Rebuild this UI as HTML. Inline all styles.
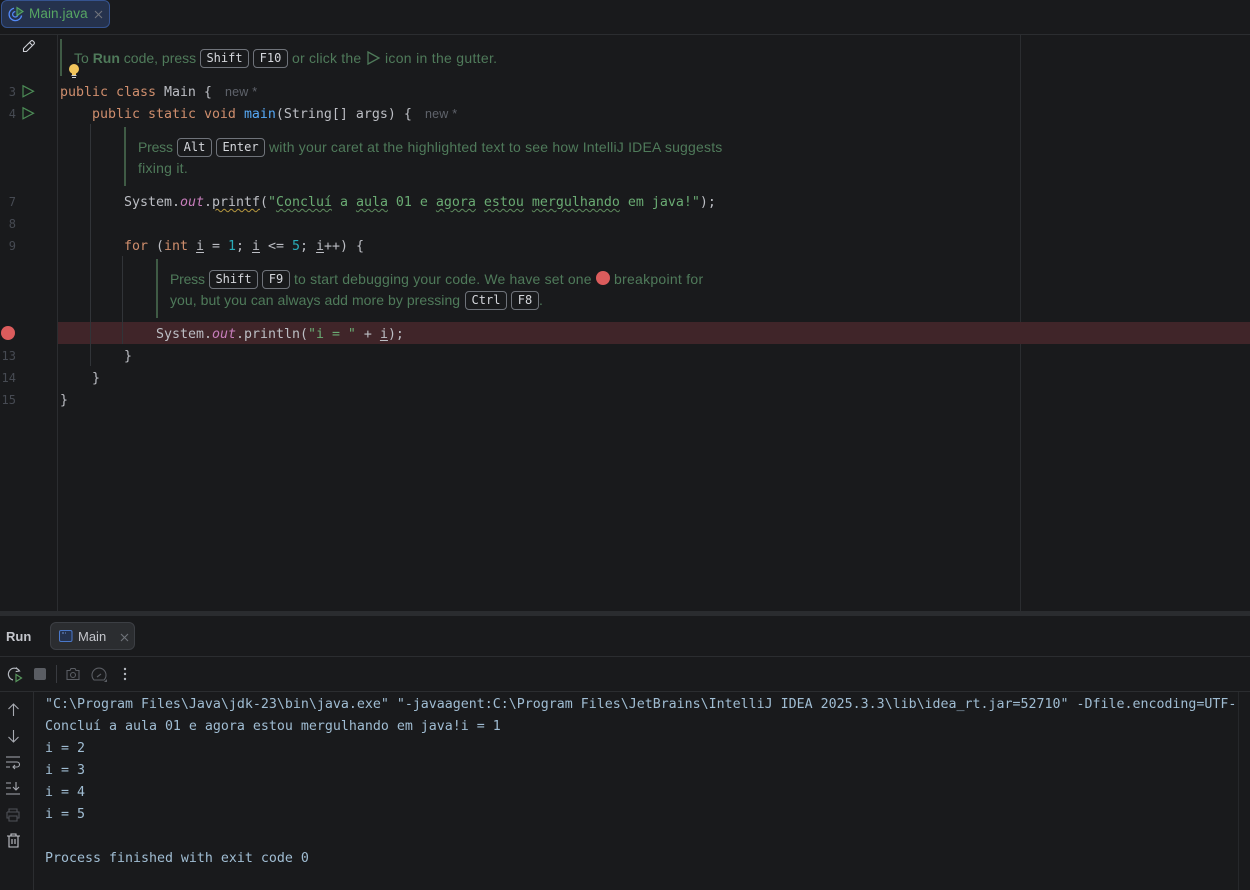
<!DOCTYPE html>
<html><head><meta charset="utf-8"><style>
html,body{margin:0;padding:0;background:#191a1c;width:1250px;height:890px;overflow:hidden}
.a{position:absolute}
.c,.c *{font-family:"DejaVu Sans Mono",monospace;font-size:13.29px}
.c{position:absolute;white-space:pre;height:22px;line-height:22px;color:#bcbec4;margin-top:2px}
.k{color:#cf8e6d}.s{color:#6aab73}.n{color:#2aacb8}.m{color:#56a8f5}.o{color:#c77dbb;font-style:italic}
.u{text-decoration:underline;text-underline-offset:2px}
.w{text-decoration:underline wavy #5f8c5f 1px;text-underline-offset:2px}
.wy{text-decoration:underline wavy #b5973f 1px;text-underline-offset:2px}
.ln{position:absolute;left:0;width:16px;text-align:right;font:12px/22px "DejaVu Sans Mono",monospace;color:#464a52;margin-top:1px}
.h{position:absolute;white-space:pre;font:14px/21px "Liberation Sans",sans-serif;color:#4f7a5a;letter-spacing:.2px;height:21px}
.h b{font-weight:bold}
.kb{position:absolute;height:17px;border:1px solid #6f737a;border-radius:4px;box-sizing:content-box;color:#d5d7dc;font:12px/17px "DejaVu Sans Mono",monospace;text-align:center}
.bar{position:absolute;width:2px;background:#3f5b45}
.g{position:absolute;width:1px;background:#313438}
.con{position:absolute;left:45px;white-space:pre;font:13.29px/22px "DejaVu Sans Mono",monospace;color:#a0bdd3;height:22px;margin-top:2px}
svg{position:absolute;overflow:visible}
</style></head><body>
<!-- tab bar -->
<div class="a" style="left:0;top:34px;width:1250px;height:1px;background:#2b2d30"></div>
<div class="a" style="left:1px;top:0;width:107px;height:26px;background:#25324d;border:1px solid #35538f;border-radius:6px"></div>
<svg style="left:8px;top:6px" width="18" height="16" viewBox="0 0 18 16" fill="none"><path d="M13.600 9.500A6.300 6.300 0 1 1 6 2.200" stroke="#548af7" stroke-width="1.3"/><path d="M10 8.300A2.700 2.700 0 1 1 7.300 5.600" stroke="#548af7" stroke-width="1.2"/><path d="M9 1.500v8l6-4z" fill="#2e5a44" stroke="#57a663" stroke-width="1.1"/></svg>
<div class="a" style="left:29px;top:5px;font:13.5px/18px 'Liberation Sans',sans-serif;color:#57a663;letter-spacing:.1px">Main.java</div>
<svg style="left:94px;top:10px" width="9" height="9" fill="none"><path d="M1 1l7 7M8 1L1 8" stroke="#6f737a" stroke-width="1.1"/></svg>

<!-- editor lines -->
<div class="a" style="left:57px;top:35px;width:1px;height:576px;background:#2b2d30"></div>
<div class="a" style="left:1020px;top:35px;width:1px;height:576px;background:#2b2d30"></div>
<div class="a" style="left:58px;top:322px;width:1192px;height:22px;background:#402529"></div>

<div class="g" style="left:90px;top:124px;height:242px"></div>
<div class="g" style="left:122px;top:256px;height:88px"></div>

<svg style="left:22px;top:39px" width="14" height="14" fill="none" stroke="#ced0d6" stroke-width="1.1"><path d="M1.500 9.500 9 2a1.400 1.400 0 0 1 2 0l1 1a1.400 1.400 0 0 1 0 2l-7.500 7.500H1.500z"/><path d="M7.500 3.500l3 3"/></svg>

<!-- line numbers -->
<div class="ln" style="top:80px">3</div>
<div class="ln" style="top:102px">4</div>
<div class="ln" style="top:190px">7</div>
<div class="ln" style="top:212px">8</div>
<div class="ln" style="top:234px">9</div>
<div class="ln" style="top:344px">13</div>
<div class="ln" style="top:366px">14</div>
<div class="ln" style="top:388px">15</div>

<svg style="left:22px;top:85px" width="13" height="13" fill="none"><path d="M1 .8v11l10.500-5.500z" stroke="#4b8a55" stroke-width="1.2"/></svg>
<svg style="left:22px;top:107px" width="13" height="13" fill="none"><path d="M1 .8v11l10.500-5.500z" stroke="#4b8a55" stroke-width="1.2"/></svg>
<div class="a" style="left:1px;top:326px;width:14px;height:14px;border-radius:50%;background:#db5c5c"></div>

<!-- hint 1 -->
<div class="bar" style="left:60px;top:39px;height:37px"></div>
<div class="h" style="left:74px;top:48px;letter-spacing:0">To <b>Run</b> code, press</div>
<div class="kb" style="left:200px;top:49px;width:47px">Shift</div>
<div class="kb" style="left:253px;top:49px;width:33px">F10</div>
<div class="h" style="left:292px;top:48px;letter-spacing:.2px">or click the</div>
<svg style="left:367px;top:51px" width="13" height="14" fill="none"><path d="M1 1v12l11-6z" stroke="#4f7a5a" stroke-width="1.3"/></svg>
<div class="h" style="left:385px;top:48px;letter-spacing:.3px">icon in the gutter.</div>
<svg style="left:67px;top:63px" width="14" height="16"><circle cx="7" cy="6" r="5" fill="#f2c55c"/><rect x="5" y="10" width="4" height="2" fill="#f2c55c"/><rect x="4.500" y="12" width="5" height="1" fill="#ced0d6"/><rect x="5" y="14" width="4" height="1" fill="#ced0d6"/></svg>

<!-- code -->
<div class="c" style="left:60px;top:80px"><span class="k">public class</span> Main {</div>
<div class="a" style="left:225px;top:83px;font:12.5px/18px 'Liberation Sans',sans-serif;color:#5f636b;letter-spacing:.2px">new *</div>
<div class="c" style="left:92px;top:102px"><span class="k">public static void</span> <span class="m">main</span>(String[] args) {</div>
<div class="a" style="left:425px;top:105px;font:12.5px/18px 'Liberation Sans',sans-serif;color:#5f636b;letter-spacing:.2px">new *</div>

<!-- hint 2 -->
<div class="bar" style="left:124px;top:127px;height:59px"></div>
<div class="h" style="left:138px;top:137px;letter-spacing:-.2px">Press</div>
<div class="kb" style="left:177px;top:138px;width:33px">Alt</div>
<div class="kb" style="left:216px;top:138px;width:47px">Enter</div>
<div class="h" style="left:269px;top:137px">with your caret at the highlighted text to see how IntelliJ IDEA suggests</div>
<div class="h" style="left:138px;top:158px;letter-spacing:.25px">fixing it.</div>

<div class="c" style="left:124px;top:190px">System.<span class="o">out</span>.<span class="wy">printf</span>(<span class="s">"<span class="w">Concluí</span> a <span class="w">aula</span> 01 e <span class="w">agora</span> <span class="w">estou</span> <span class="w">mergulhando</span> em java!"</span>);</div>
<div class="c" style="left:124px;top:234px"><span class="k">for</span> (<span class="k">int</span> <span class="u">i</span> = <span class="n">1</span>; <span class="u">i</span> &lt;= <span class="n">5</span>; <span class="u">i</span>++) {</div>

<!-- hint 3 -->
<div class="bar" style="left:156px;top:259px;height:59px"></div>
<div class="h" style="left:170px;top:269px;letter-spacing:-.2px">Press</div>
<div class="kb" style="left:209px;top:270px;width:47px">Shift</div>
<div class="kb" style="left:262px;top:270px;width:26px">F9</div>
<div class="h" style="left:294px;top:269px;letter-spacing:.17px">to start debugging your code. We have set one</div>
<div class="a" style="left:596px;top:271px;width:14px;height:14px;border-radius:50%;background:#db5c5c"></div>
<div class="h" style="left:614px;top:269px;letter-spacing:.27px">breakpoint for</div>
<div class="h" style="left:170px;top:290px;letter-spacing:.05px">you, but you can always add more by pressing</div>
<div class="kb" style="left:465px;top:291px;width:40px">Ctrl</div>
<div class="kb" style="left:511px;top:291px;width:26px">F8</div>
<div class="h" style="left:539px;top:290px">.</div>

<div class="c" style="left:156px;top:322px">System.<span class="o">out</span>.println(<span class="s">"i = "</span> + <span class="u">i</span>);</div>
<div class="c" style="left:124px;top:344px">}</div>
<div class="c" style="left:92px;top:366px">}</div>
<div class="c" style="left:60px;top:388px">}</div>

<!-- run panel -->
<div class="a" style="left:0;top:611px;width:1250px;height:5px;background:#2a2c2f"></div>
<div class="a" style="left:6px;top:628px;font:bold 13px/18px 'Liberation Sans',sans-serif;color:#c4c6cc">Run</div>
<div class="a" style="left:50px;top:622px;width:83px;height:26px;background:#2b2d30;border:1px solid #3c3f44;border-radius:6px"></div>
<svg style="left:59px;top:630px" width="14" height="12" fill="none"><rect x=".5" y=".5" width="12.500" height="11" rx="1.500" stroke="#4a78c9" fill="#25324d"/><path d="M3 3h2M6 3h1" stroke="#6d8fd0"/></svg>
<div class="a" style="left:78px;top:628px;font:13px/18px 'Liberation Sans',sans-serif;color:#c4c6cc">Main</div>
<svg style="left:120px;top:633px" width="9" height="9" fill="none"><path d="M1 1l7 7M8 1L1 8" stroke="#6f737a" stroke-width="1.1"/></svg>
<div class="a" style="left:0;top:656px;width:1250px;height:1px;background:#2b2d30"></div>
<div class="a" style="left:0;top:691px;width:1250px;height:1px;background:#2b2d30"></div>
<div class="a" style="left:33px;top:691px;width:1px;height:199px;background:#2b2d30"></div>
<div class="a" style="left:1238px;top:692px;width:1px;height:198px;background:#26282b"></div>

<!-- run toolbar -->
<svg style="left:7px;top:666px" width="18" height="16" fill="none"><path d="M12.500 5A6 6 0 1 0 6 14" stroke="#b4b8bf" stroke-width="1.2"/><path d="M9 1.500l3.500 3.500-3.800.6" stroke="#b4b8bf" stroke-width="1.1"/><path d="M9 8.500v7l5.500-3.500z" stroke="#57965c" stroke-width="1.2"/></svg>
<div class="a" style="left:34px;top:668px;width:12px;height:12px;border-radius:2px;background:#5a5d63"></div>
<div class="a" style="left:56px;top:665px;width:1px;height:18px;background:#393b40"></div>
<svg style="left:66px;top:667px" width="14" height="14" fill="none" stroke="#5a5d63" stroke-width="1.1"><path d="M1 3.500h3l1-2h4l1 2h3v9H1z"/><circle cx="7" cy="8" r="2.500"/></svg>
<svg style="left:91px;top:667px" width="17" height="15" fill="none" stroke="#5a5d63" stroke-width="1.1"><path d="M3 13A7 7 0 1 1 13 13z"/><path d="M6 10l4-3" /><path d="M13 15l3 0 0-3z" fill="#5a5d63" stroke="none"/></svg>
<svg style="left:123px;top:667px" width="4" height="14" fill="#b4b8bf"><circle cx="2" cy="2" r="1.200"/><circle cx="2" cy="7" r="1.200"/><circle cx="2" cy="12" r="1.200"/></svg>

<!-- side toolbar -->
<svg style="left:7px;top:703px" width="13" height="14" fill="none" stroke="#a8abb2" stroke-width="1.1"><path d="M6.500 13V1M1.500 6l5-5 5 5"/></svg>
<svg style="left:7px;top:729px" width="13" height="14" fill="none" stroke="#a8abb2" stroke-width="1.1"><path d="M6.500 1v12M1.500 8l5 5 5-5"/></svg>
<svg style="left:6px;top:756px" width="15" height="13" fill="none" stroke="#a8abb2" stroke-width="1.1"><path d="M0 1h14M0 6h11a2.500 2.500 0 0 1 0 5H7M9 9l-2 2 2 2M0 11h4"/></svg>
<svg style="left:6px;top:782px" width="15" height="13" fill="none" stroke="#a8abb2" stroke-width="1.1"><path d="M0 1h5M0 6h5M0 12h14M10 0v8M7 5l3 3 3-3"/></svg>
<svg style="left:6px;top:808px" width="14" height="13" fill="none" stroke="#4e5157" stroke-width="1.1"><path d="M3 4V1h8v3M1 4h12v6h-2M3 10H1V4M3 8h8v5H3z"/></svg>
<svg style="left:7px;top:833px" width="13" height="15" fill="none" stroke="#c4c6cc" stroke-width="1.1"><path d="M0 3h13M4 3V1h5v2M2 3v11h9V3M5 6v5M8 6v5"/></svg>

<!-- console -->
<div class="con" style="top:692px;width:1192px;overflow:hidden">"C:\Program Files\Java\jdk-23\bin\java.exe" "-javaagent:C:\Program Files\JetBrains\IntelliJ IDEA 2025.3.3\lib\idea_rt.jar=52710" -Dfile.encoding=UTF-8</div>
<div class="con" style="top:714px">Concluí a aula 01 e agora estou mergulhando em java!i = 1</div>
<div class="con" style="top:736px">i = 2</div>
<div class="con" style="top:758px">i = 3</div>
<div class="con" style="top:780px">i = 4</div>
<div class="con" style="top:802px">i = 5</div>
<div class="con" style="top:846px">Process finished with exit code 0</div>
</body></html>
